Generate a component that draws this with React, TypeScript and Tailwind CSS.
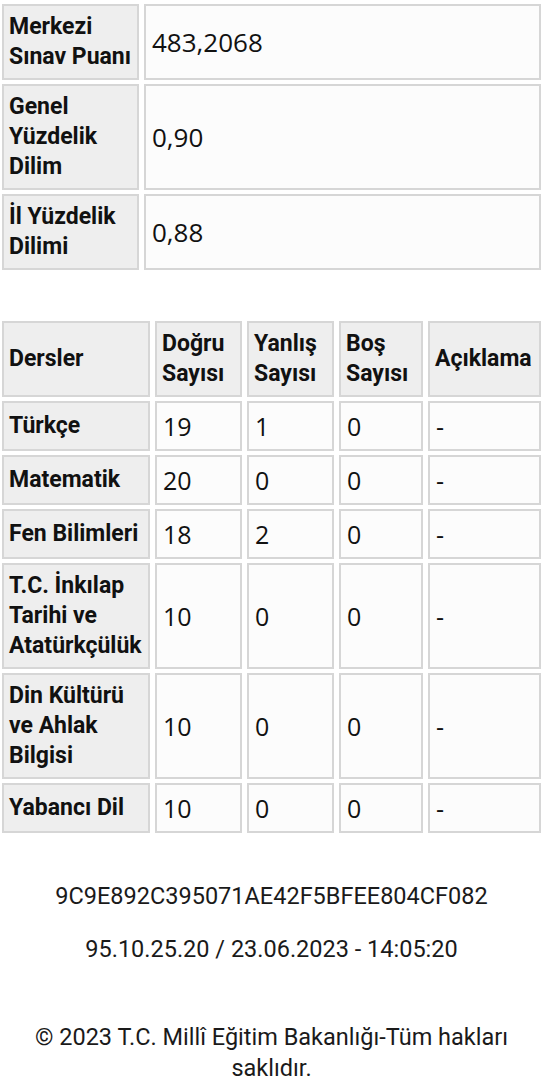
const summary = [
  { label: ["Merkezi", "Sınav Puanı"], value: "483,2068" },
  { label: ["Genel", "Yüzdelik", "Dilim"], value: "0,90" },
  { label: ["İl Yüzdelik", "Dilimi"], value: "0,88" },
];

const headers = [["Dersler"], ["Doğru", "Sayısı"], ["Yanlış", "Sayısı"], ["Boş", "Sayısı"], ["Açıklama"]];

const lessons = [
  { name: ["Türkçe"], d: "19", y: "1", b: "0" },
  { name: ["Matematik"], d: "20", y: "0", b: "0" },
  { name: ["Fen Bilimleri"], d: "18", y: "2", b: "0" },
  { name: ["T.C. İnkılap", "Tarihi ve", "Atatürkçülük"], d: "10", y: "0", b: "0" },
  { name: ["Din Kültürü", "ve Ahlak", "Bilgisi"], d: "10", y: "0", b: "0" },
  { name: ["Yabancı Dil"], d: "10", y: "0", b: "0" },
];

function HeadCell({ lines }: { lines: string[] }) {
  return (
    <div className="flex items-center border-2 border-[#d6d6d6] bg-[#eeeeee] px-[5px] py-[6px] font-['Roboto',sans-serif] text-[23px] font-bold leading-[30px] text-[#111]">
      <div>
        {lines.map((l) => (
          <div key={l} className="whitespace-nowrap">
            {l}
          </div>
        ))}
      </div>
    </div>
  );
}

function ValueCell({ value, big }: { value: string; big?: boolean }) {
  return (
    <div
      className={`flex items-center border-2 border-[#d6d6d6] bg-[#fcfcfc] px-[6px] py-[6px] font-['Open_Sans',sans-serif] leading-[34px] text-[#111] ${
        big ? "text-[26px]" : "text-[25px]"
      }`}
    >
      {value}
    </div>
  );
}

export default function App() {
  return (
    <div className="min-h-[1080px] bg-white pt-[4px]">
      <div className="grid grid-cols-[137px_1fr] gap-x-[5px] gap-y-[4px] pl-[2px] pr-[2px]">
        {summary.map((row) => (
          <div key={row.value} className="contents">
            <HeadCell lines={row.label} />
            <ValueCell value={row.value} big />
          </div>
        ))}
      </div>

      <div className="mt-[51px] grid grid-cols-[148px_87px_87px_84px_113px] gap-x-[5px] gap-y-[4px] pl-[2px]">
        {headers.map((h) => (
          <HeadCell key={h.join(" ")} lines={h} />
        ))}
        {lessons.map((row) => (
          <div key={row.name.join(" ")} className="contents">
            <HeadCell lines={row.name} />
            <ValueCell value={row.d} />
            <ValueCell value={row.y} />
            <ValueCell value={row.b} />
            <ValueCell value="-" />
          </div>
        ))}
      </div>

      <footer className="pt-[48px] text-center font-['Roboto',sans-serif] text-[23.5px] leading-[31px] text-[#1a1a1a]">
        <p>9C9E892C395071AE42F5BFEE804CF082</p>
        <p className="mt-[22px]">95.10.25.20 / 23.06.2023 - 14:05:20</p>
        <p className="mt-[57px] px-[30px]">© 2023 T.C. Millî Eğitim Bakanlığı-Tüm hakları saklıdır.</p>
      </footer>
    </div>
  );
}
